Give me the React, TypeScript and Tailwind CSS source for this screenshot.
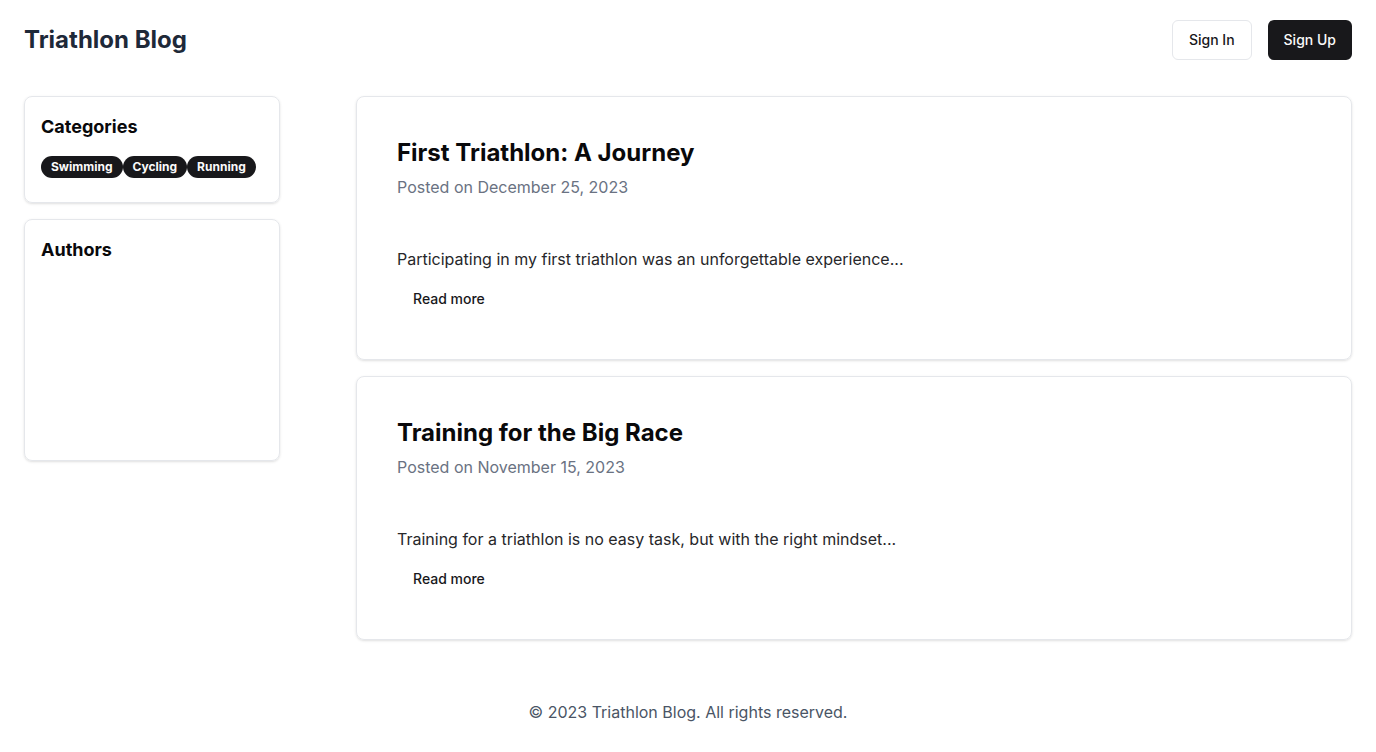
import React from 'react';

const posts = [
  {
    title: 'First Triathlon: A Journey',
    date: 'December 25, 2023',
    excerpt: 'Participating in my first triathlon was an unforgettable experience...',
  },
  {
    title: 'Training for the Big Race',
    date: 'November 15, 2023',
    excerpt: 'Training for a triathlon is no easy task, but with the right mindset...',
  },
];

const categories = ['Swimming', 'Cycling', 'Running'];

export default function App() {
  return (
    <div className="min-h-screen bg-white text-zinc-950 font-['Inter',sans-serif]">
      <header className="flex items-center justify-between px-6 py-5">
        <h1 className="text-2xl font-bold text-gray-800">Triathlon Blog</h1>
        <div className="flex items-center gap-4">
          <button className="h-10 px-4 rounded-md border border-gray-200 bg-white text-sm font-medium text-zinc-900">
            Sign In
          </button>
          <button className="h-10 px-4 rounded-md bg-zinc-900 text-sm font-medium text-zinc-50">
            Sign Up
          </button>
        </div>
      </header>

      <main className="flex gap-[76px] px-6 pt-4">
        <aside className="w-64 shrink-0 flex flex-col gap-4">
          <div className="rounded-lg border border-gray-200 shadow-sm px-4 pt-4 pb-6">
            <h2 className="text-lg font-bold leading-7">Categories</h2>
            <div className="flex mt-[15px]">
              {categories.map((c) => (
                <span
                  key={c}
                  className="rounded-full bg-zinc-900 px-2.5 h-[22px] flex items-center text-xs font-bold text-zinc-50"
                >
                  {c}
                </span>
              ))}
            </div>
          </div>
          <div className="rounded-lg border border-gray-200 shadow-sm p-4 h-[242px]">
            <h2 className="text-lg font-bold leading-7">Authors</h2>
          </div>
        </aside>

        <section className="flex-1 flex flex-col gap-4">
          {posts.map((p) => (
            <article key={p.title} className="rounded-lg border border-gray-200 shadow-sm p-10">
              <h3 className="text-2xl font-bold leading-8">{p.title}</h3>
              <p className="mt-1.5 text-gray-500">Posted on {p.date}</p>
              <p className="mt-[48px] text-zinc-800">{p.excerpt}</p>
              <button className="mt-2 h-10 px-4 rounded-md text-sm font-medium text-zinc-900">
                Read more
              </button>
            </article>
          ))}
        </section>
      </main>

      <footer className="mt-[60px] pb-7 text-center text-gray-600">
        © 2023 Triathlon Blog. All rights reserved.
      </footer>
    </div>
  );
}
